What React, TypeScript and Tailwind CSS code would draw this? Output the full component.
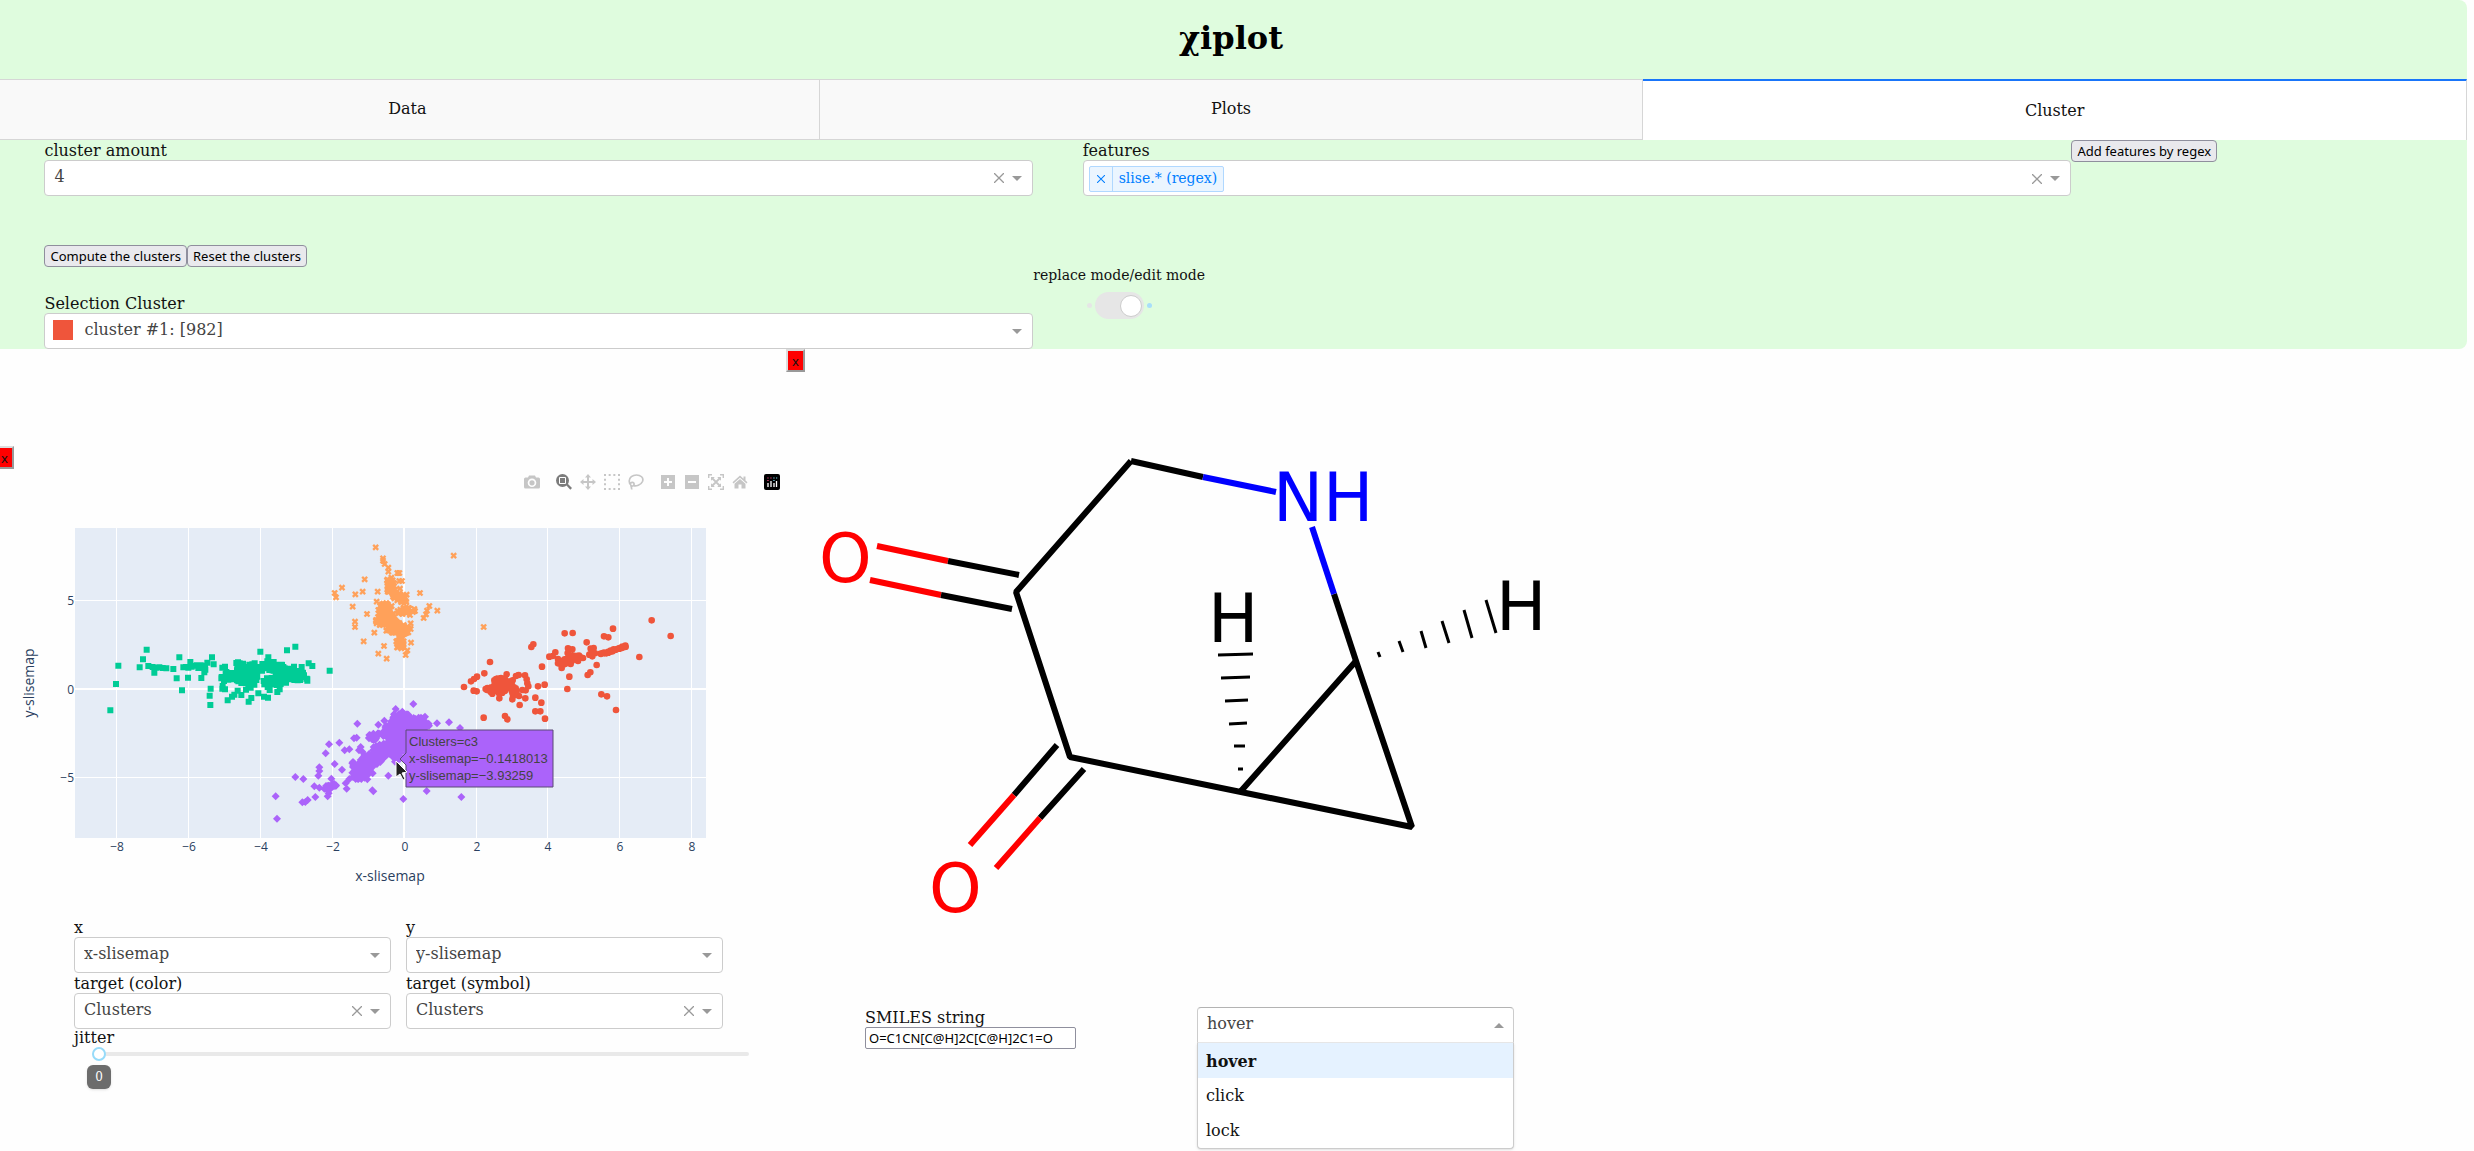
import React, { useId } from "react";

type Band = [x1: number, y1: number, x2: number, y2: number, spread: number, count: number];
type Point = [number, number];

// Marker positions are kept in thirds of a pixel, measured from the top left of the marker layer.
const GREEN: Point[] = [
  [260, 389], [249, 418], [239, 442], [175, 437], [168, 492], [151, 571], [265, 438], [283, 458], [358, 412],
  [350, 475], [340, 447], [384, 473], [366, 511], [449, 527], [451, 555], [452, 506], [456, 412], [461, 433],
  [424, 474], [391, 426], [601, 395], [681, 391], [706, 380], [809, 452], [746, 430], [757, 438], [625, 412],
  [566, 545], [503, 541], [574, 534], [595, 520], [624, 533], [652, 516], [612, 530], [544, 525], [516, 530],
  [725, 441], [702, 440], [487, 443], [495, 440], [484, 475], [488, 498], [495, 508], [278, 441], [288, 443],
  [298, 442], [308, 444], [319, 445], [370, 442], [378, 441], [385, 443], [395, 440], [402, 437], [411, 436],
  [415, 444], [422, 436], [428, 444], [435, 437], [442, 428], [433, 457], [436, 449], [523, 524], [533, 512],
  [558, 509], [629, 510], [659, 508], [572, 503], [487, 506], [740, 476], [742, 482],
];
const GREEN_BANDS: Band[] = [
  [530, 440, 600, 445, 14, 60],
  [495, 470, 590, 470, 20, 60],
  [545, 488, 600, 488, 10, 14],
  [618, 435, 670, 450, 16, 45],
  [618, 490, 665, 480, 16, 28],
  [660, 455, 730, 472, 17, 80],
];

const ORANGE: Point[] = [
  [947, 82], [969, 115], [969, 122], [974, 132], [985, 143], [985, 155], [1012, 159], [1018, 159], [914, 178],
  [846, 203], [824, 219], [828, 232], [886, 223], [908, 215], [953, 215], [878, 260], [921, 282], [885, 305],
  [885, 321], [911, 364], [943, 338], [950, 245], [972, 378], [955, 401], [980, 416], [1037, 405], [1042, 391],
  [1053, 368], [1018, 183], [1026, 183], [1020, 206], [1040, 224], [1080, 219], [1108, 258], [1132, 272],
  [1091, 294], [1098, 283], [1101, 272], [1063, 267], [1065, 273], [1050, 285], [1052, 310], [1181, 107],
  [1271, 321], [960, 258], [950, 310],
];
const ORANGE_BANDS: Band[] = [
  [990, 180, 994, 215, 12, 50],
  [1003, 226, 1032, 240, 12, 36],
  [965, 265, 1000, 260, 14, 22],
  [958, 302, 990, 290, 17, 80],
  [985, 312, 1032, 330, 21, 120],
  [1018, 350, 1022, 378, 12, 44],
  [1015, 275, 1050, 272, 13, 22],
];

const RED: Point[] = [
  [1775, 301], [1832, 348], [1659, 326], [1738, 411], [1668, 570], [1641, 529], [1624, 523], [1610, 435],
  [1583, 465], [1591, 457], [1522, 507], [1528, 470], [1632, 349], [1645, 352], [1580, 367], [1514, 340],
  [1538, 339], [1414, 381], [1420, 373], [1446, 440], [1290, 426], [1273, 460], [1212, 501], [1340, 463],
  [1233, 484], [1242, 477], [1251, 470], [1241, 512], [1250, 514], [1434, 499], [1454, 494], [1444, 548],
  [1426, 533], [1396, 535], [1379, 555], [1426, 574], [1441, 574], [1455, 596], [1335, 588], [1342, 598],
  [1271, 593], [1357, 538], [1318, 535], [1376, 465], [1395, 466], [1400, 478], [1402, 490], [1405, 499],
  [1397, 511], [1387, 510], [1377, 528], [1359, 529], [1468, 410], [1478, 408], [1486, 397], [1524, 385],
  [1537, 388], [1523, 399], [1592, 386], [1601, 384], [1605, 400], [1597, 409], [1588, 404], [1569, 414],
  [1554, 423], [1557, 407], [1532, 432], [1505, 444], [1494, 430], [1494, 417], [1368, 468], [1370, 522],
];
const RED_BANDS: Band[] = [
  [1305, 485, 1345, 490, 14, 46],
  [1285, 512, 1340, 505, 13, 52],
  [1352, 485, 1362, 515, 9, 16],
  [1505, 428, 1535, 418, 9, 30],
  [1535, 413, 1562, 410, 6, 10],
  [1623, 402, 1660, 392, 3, 20],
  [1660, 390, 1696, 379, 2, 20],
];

const PURPLE: Point[] = [
  [1060, 552], [1007, 567], [1027, 575], [892, 611], [955, 614], [973, 602], [994, 604], [838, 668], [807, 673],
  [797, 700], [824, 732], [846, 749], [890, 653], [882, 655], [854, 691], [868, 688], [778, 742], [778, 753],
  [775, 767], [706, 771], [730, 777], [647, 829], [651, 896], [763, 799], [778, 803], [814, 776], [766, 831],
  [727, 847], [736, 846], [743, 840], [803, 829], [806, 820], [857, 790], [860, 806], [902, 681], [907, 695],
  [897, 691], [937, 811], [940, 814], [985, 767], [1030, 837], [1100, 813], [1204, 831], [1200, 624],
  [1167, 607], [1131, 610], [1106, 611], [1107, 617], [1095, 590], [1090, 595], [922, 778], [938, 760],
];
const PURPLE_BANDS: Band[] = [
  [800, 802, 832, 796, 9, 22],
  [880, 768, 915, 755, 18, 46],
  [880, 742, 930, 725, 16, 34],
  [912, 732, 960, 705, 23, 110],
  [950, 705, 1030, 660, 26, 190],
  [926, 660, 950, 640, 12, 20],
  [970, 645, 1010, 610, 16, 44],
  [1003, 588, 1045, 592, 13, 36],
  [1005, 640, 1080, 618, 24, 190],
  [1060, 605, 1086, 603, 12, 34],
  [1010, 705, 1030, 700, 22, 24],
];

function spread(points: Point[], bands: Band[], start: number): Point[] {
  let seed = start;
  const next = () => {
    seed = (seed * 1664525 + 1013904223) % 4294967296;
    return seed / 4294967296;
  };
  const result = [...points];
  for (const [x1, y1, x2, y2, radius, count] of bands) {
    for (let i = 0; i < count; i++) {
      const t = next();
      const r = radius * Math.sqrt(next());
      const a = next() * Math.PI * 2;
      result.push([
        Math.round(x1 + (x2 - x1) * t + r * Math.cos(a)),
        Math.round(y1 + (y2 - y1) * t + r * Math.sin(a)),
      ]);
    }
  }
  return result;
}

const SHAPES = {
  square: "m-9-9h18v18h-18z",
  circle: "m-10 0a10 10 0 1 0 20 0a10 10 0 1 0-20 0z",
  diamond: "m0-12l12 12l-12 12l-12-12z",
  cross: "m-10-5l5-5l5 5l5-5l5 5l-5 5l5 5l-5 5l-5-5l-5 5l-5-5l5-5z",
};

const SERIES = [
  { color: "#EF553B", shape: SHAPES.circle, points: spread(RED, RED_BANDS, 11) },
  { color: "#00CC96", shape: SHAPES.square, points: spread(GREEN, GREEN_BANDS, 5) },
  { color: "#AB63FA", shape: SHAPES.diamond, points: spread(PURPLE, PURPLE_BANDS, 23) },
  { color: "#FFA15A", shape: SHAPES.cross, points: spread(ORANGE, ORANGE_BANDS, 42) },
];

const X_TICKS = [
  { x: 116, label: "−8" }, { x: 188, label: "−6" }, { x: 260, label: "−4" }, { x: 332, label: "−2" },
  { x: 404, label: "0" }, { x: 476, label: "2" }, { x: 547, label: "4" }, { x: 619, label: "6" }, { x: 691, label: "8" },
];
const Y_TICKS = [
  { y: 110, label: "5" }, { y: 199, label: "0" }, { y: 287, label: "−5" },
];

function ScatterPlot() {
  return (
    <svg width="786" height="427" viewBox="0 0 786 427" role="img" aria-label="Scatter plot of x-slisemap against y-slisemap" className="block">
      <rect x="75" y="38" width="631" height="310" fill="#E5ECF6" />
      <g stroke="#fff" shapeRendering="crispEdges">
        {X_TICKS.map((t) => (
          <line key={t.label} x1={t.x} x2={t.x} y1="38" y2="348" strokeWidth={t.label === "0" ? 2 : 1} />
        ))}
        {Y_TICKS.map((t) => (
          <line key={t.label} x1="75" x2="706" y1={t.y} y2={t.y} strokeWidth={t.label === "0" ? 2 : 1} />
        ))}
      </g>
      <svg x="60" y="30" width="720" height="340" viewBox="0 0 2160 1020">
        {SERIES.map((s) => (
          <path key={s.color} fill={s.color} d={s.points.map(([x, y]) => `M${x} ${y}${s.shape}`).join("")} />
        ))}
      </svg>
      <g fill="#2a3f5f" fontFamily="'Open Sans', 'Noto Sans', sans-serif" fontSize="12">
        {X_TICKS.map((t) => (
          <text key={t.label} x={t.x + 1} y="361" textAnchor="middle">{t.label}</text>
        ))}
        {Y_TICKS.map((t) => (
          <text key={t.label} x="74" y={t.y + 5} textAnchor="end">{t.label}</text>
        ))}
        <text x="390" y="391" fontSize="14" textAnchor="middle">x-slisemap</text>
        <text transform="translate(34 193) rotate(-90)" fontSize="14" textAnchor="middle">y-slisemap</text>
      </g>
      <path d="M400 269L406 263V240H553V297H406V275Z" fill="#AB63FA" stroke="#5b4a75" />
      <g fill="#444" fontFamily="'Liberation Sans', Arial, sans-serif" fontSize="13">
        <text x="409" y="256">Clusters=c3</text>
        <text x="409" y="273">x-slisemap=−0.1418013</text>
        <text x="409" y="290">y-slisemap=−3.93259</text>
      </g>
      <path d="M396 271V287L400 284L403 290L405 289L402 283L407 282Z" fill="#222" stroke="#fff" strokeWidth="1" />
    </svg>
  );
}

const BONDS: { color: string; d: string }[] = [
  { color: "#000", d: "M417 105L345 89" },
  { color: "#000", d: "M345 89L230 220L284 385L626 455L570 289L455 419" },
  { color: "#000", d: "M570 289L548 222" },
  { color: "#00f", d: "M548 222L526 155" },
  { color: "#00f", d: "M417 105L490 120" },
  { color: "#f00", d: "M91 174L162 189M84 208L155 223" },
  { color: "#000", d: "M162 189L233 203M155 223L226 237" },
  { color: "#000", d: "M271 373L228 423M298 397L254 446" },
  { color: "#f00", d: "M228 423L184 473M254 446L210 496" },
];

function Molecule() {
  return (
    <svg width="786" height="635" viewBox="0 0 786 635" role="img" aria-label="Molecule O=C1CN[C@H]2C[C@H]2C1=O" className="block">
      <g fill="none" strokeWidth="6">
        {BONDS.map((b) => (
          <path key={b.d} d={b.d} stroke={b.color} strokeLinejoin="bevel" />
        ))}
      </g>
      <path
        d="M432 283L467 282M435 306L464 305M439 329L462 328M443 352L461 351M448 374L459 374M452 397L457 397M592 280L594 285M613 269L617 280M635 259L640 276M656 249L663 271M678 238L686 266M700 228L710 261"
        stroke="#000"
        strokeWidth="3"
      />
      <g fontFamily="'DejaVu Sans', sans-serif" fontSize="67">
        <text x="487" y="149" fill="#00f">NH</text>
        <text x="422" y="270">H</text>
        <text x="710" y="258">H</text>
        <text x="33" y="210" fill="#f00">O</text>
        <text x="143" y="540" fill="#f00">O</text>
      </g>
    </svg>
  );
}

function Cross({ className }: { className: string }) {
  return (
    <svg viewBox="0 0 10 10" className={className} fill="none" stroke="currentColor" aria-hidden="true">
      <path d="M0 0L10 10M10 0L0 10" strokeWidth="1.3" />
    </svg>
  );
}

function Arrow({ up = false }: { up?: boolean }) {
  return (
    <svg width="10" height="5" viewBox="0 0 10 5" fill="#999" aria-hidden="true">
      <path d={up ? "M0 5L5 0L10 5Z" : "M0 0H10L5 5Z"} />
    </svg>
  );
}

function Dropdown(props: { label: string; value: string; clearable?: boolean; swatch?: boolean }) {
  const id = useId();
  return (
    <div>
      <label htmlFor={id} className="block h-5 leading-[22px]">{props.label}</label>
      <div className="relative">
        <select
          id={id}
          className={`block h-9 w-full appearance-none rounded border border-[#ccc] bg-white pb-[3px] text-[#444] outline-none ${props.swatch ? "pl-[39px]" : "pl-[9px]"}`}
        >
          <option>{props.value}</option>
        </select>
        {props.swatch && <span className="absolute left-[9px] top-[7px] size-5 bg-[#EF553B]" />}
        <div className="pointer-events-none absolute inset-y-0 right-[11px] flex items-center gap-2">
          {props.clearable && (
            <button type="button" aria-label={`Clear ${props.label}`} className="pointer-events-auto text-[#999]">
              <Cross className="size-[10px]" />
            </button>
          )}
          <Arrow />
        </div>
      </div>
    </div>
  );
}

function SmallButton({ children }: { children: string }) {
  return (
    <button type="button" className="h-[22px] rounded border border-[#8f8f9d] bg-[#e9e9ed] px-[5px] font-['Noto_Sans',sans-serif] text-[13px] leading-5 whitespace-nowrap text-black">
      {children}
    </button>
  );
}

function CloseButton({ className }: { className: string }) {
  return (
    <button
      type="button"
      className={`h-[23px] w-[19px] border-2 border-t-[#ddd] border-r-[#999] border-b-[#999] border-l-[#ddd] bg-[red] font-['Noto_Sans',sans-serif] text-[13px] leading-[18px] ${className}`}
    >
      x
    </button>
  );
}

function MultiDropdown() {
  return (
    <div>
      <div className="h-5 leading-[22px]" id="features-label">features</div>
      <div role="group" aria-labelledby="features-label" className="flex h-9 items-center justify-between rounded border border-[#ccc] bg-white pt-px pr-[10px] pl-[5px]">
        <div className="flex h-[26px] items-center rounded-xs border border-[#b0d8ff] bg-[#ebf5ff] text-[14px] text-[#007eff]">
          <button type="button" aria-label="Remove slise.* (regex)" className="flex h-full w-[23px] items-center justify-center border-r border-[#b0d8ff]">
            <Cross className="size-2" />
          </button>
          <span className="px-[6px]">slise.* (regex)</span>
        </div>
        <div className="flex items-center gap-2">
          <button type="button" aria-label="Clear features" className="text-[#999]">
            <Cross className="size-[10px]" />
          </button>
          <Arrow />
        </div>
      </div>
    </div>
  );
}

function Tool({ name, dark, children }: { name: string; dark?: boolean; children: React.ReactNode }) {
  return (
    <button type="button" aria-label={name} className={dark ? "text-[#7c7c7c]" : "text-[#c6c6c6]"}>
      <svg width="16" height="16" viewBox="0 0 16 16" fill="currentColor" className="block">{children}</svg>
    </button>
  );
}

function Modebar() {
  return (
    <div className="flex justify-end gap-4 pr-[6px]">
      <Tool name="Download plot as a png">
        <path fillRule="evenodd" d="M1.500 3.500H4L5 1.500H11L12 3.500H14.500Q16 3.500 16 5V13Q16 14.500 14.500 14.500H1.500Q0 14.500 0 13V5Q0 3.500 1.500 3.500ZM8 4.500A4.300 4.300 0 1 0 8 13.100A4.300 4.300 0 1 0 8 4.500ZM8 6.200A2.600 2.600 0 1 1 8 11.400A2.600 2.600 0 1 1 8 6.200Z" />
      </Tool>
      <div className="flex gap-2">
        <Tool name="Zoom" dark>
          <circle cx="6.500" cy="6.500" r="6.500" />
          <path d="M10 11L11.500 9.500L16 14L14.300 15.700Z" />
          <path d="M3.500 3.500H9.500V9.500H3.500Z" fill="none" stroke="#fff" />
        </Tool>
        <Tool name="Pan">
          <path d="M8 0L11 3.500H9V7H12.500V5L16 8L12.500 11V9H9V12.500H11L8 16L5 12.500H7V9H3.500V11L0 8L3.500 5V7H7V3.500H5Z" />
        </Tool>
        <Tool name="Box select">
          <path d="M0 1H16M0 15H16" stroke="currentColor" strokeWidth="2" strokeDasharray="2 2.670" />
          <path d="M1 4.700V12M15 4.700V12" stroke="currentColor" strokeWidth="2" strokeDasharray="2 2.500" />
        </Tool>
        <Tool name="Lasso select">
          <path fill="none" stroke="currentColor" strokeWidth="1.700" d="M5 11.500C8 12.800 13 11 14.500 7.500C16 3.500 12.500 1 8.500 1C4.500 1 1.200 3.500 1.200 7C1.200 9 2 10.500 3 11M2.500 10A1.800 1.800 0 1 1 5.500 11.500C4.500 12.500 3 12 2.800 11C3 13 4 14 3.500 15.500" />
        </Tool>
      </div>
      <div className="flex gap-2">
        <Tool name="Zoom in">
          <path fillRule="evenodd" d="M1 1H15V15H1ZM7 4V7H4V9H7V12H9V9H12V7H9V4Z" />
        </Tool>
        <Tool name="Zoom out">
          <path fillRule="evenodd" d="M1 1H15V15H1ZM4 7V9H12V7Z" />
        </Tool>
        <Tool name="Autoscale">
          <path fill="none" stroke="currentColor" strokeWidth="1.400" d="M.7 4V.7H4M12 .7H15.300V4M15.300 12V15.300H12M4 15.300H.7V12" />
          <path fill="none" stroke="currentColor" strokeWidth="1.800" d="M4 4L12 12M12 4L4 12" />
          <path d="M3 3H6.800L3 6.800ZM13 3V6.800L9.200 3ZM3 13V9.200L6.800 13ZM13 13H9.200L13 9.200Z" />
        </Tool>
        <Tool name="Reset axes">
          <path d="M8 1.500L11.500 4.700V2.500H13.500V6.500L15.500 8.300L14.500 9.500L8 3.700L1.500 9.500L.5 8.300Z" />
          <path d="M8 5L13.500 9.800V14.500H9.500V10.500H6.500V14.500H2.500V9.800Z" />
        </Tool>
      </div>
      <a href="#plotly" aria-label="Produced with Plotly">
        <svg width="16" height="16" viewBox="0 0 16 16" className="block">
          <rect width="16" height="16" rx="2" fill="#000" />
          <path d="M4 9V13M7 7V13M10 9V13M12.500 7V13" stroke="#fff" strokeWidth="1.300" />
          <path d="M3.300 4H4.600M3.300 6.500H4.600M6.300 4H7.600" stroke="#e8457c" strokeWidth="1.200" />
          <path d="M9.300 4H10.600M9.300 6.500H10.600M12 4H13.200" stroke="#7fd6e8" strokeWidth="1.200" />
        </svg>
      </a>
    </div>
  );
}

function PlotControls() {
  return (
    <div className="pl-[74px]">
      <div className="grid w-[649px] grid-cols-2 gap-x-[15px]">
        <Dropdown label="x" value="x-slisemap" />
        <Dropdown label="y" value="y-slisemap" />
        <Dropdown label="target (color)" value="Clusters" clearable />
        <Dropdown label="target (symbol)" value="Clusters" clearable />
      </div>
      <label htmlFor="jitter" className="block h-[18px] leading-[18px]">jitter</label>
      <div className="ml-[18px] w-[657px]">
        <input
          id="jitter"
          type="range"
          min="0"
          max="1"
          step="0.01"
          defaultValue="0"
          className="block h-[14px] w-full appearance-none bg-transparent [&::-webkit-slider-runnable-track]:h-1 [&::-webkit-slider-runnable-track]:rounded-full [&::-webkit-slider-runnable-track]:bg-[#e9e9e9] [&::-webkit-slider-thumb]:-mt-[5px] [&::-webkit-slider-thumb]:size-[14px] [&::-webkit-slider-thumb]:appearance-none [&::-webkit-slider-thumb]:rounded-full [&::-webkit-slider-thumb]:border-2 [&::-webkit-slider-thumb]:border-[#96dbfa] [&::-webkit-slider-thumb]:bg-white"
        />
      </div>
      <output htmlFor="jitter" className="mt-1 ml-[13px] flex h-6 w-6 items-center justify-center rounded-md bg-[#6c6c6c] text-xs text-white shadow-sm">
        0
      </output>
    </div>
  );
}

function TriggerDropdown() {
  return (
    <div className="w-[317px]">
      <div className="relative">
        <select aria-label="Mode" className="block h-9 w-full appearance-none rounded-t border border-[#ccc] border-t-[#b3b3b3] border-b-[#e6e6e6] bg-white pb-[3px] pl-[9px] text-[#444] outline-none">
          <option>hover</option>
          <option>click</option>
          <option>lock</option>
        </select>
        <div className="pointer-events-none absolute inset-y-0 right-[10px] flex items-center">
          <Arrow up />
        </div>
      </div>
      <ul role="listbox" aria-label="Mode options" className="rounded-b border border-t-0 border-[#ccc] bg-white shadow-sm">
        <li role="option" aria-selected="true" className="h-[35px] bg-[#e5f2ff] px-2 leading-[38px] font-bold">hover</li>
        <li role="option" aria-selected="false" className="h-[35px] px-2 leading-[36px]">click</li>
        <li role="option" aria-selected="false" className="h-[35px] px-2 leading-[36px]">lock</li>
      </ul>
    </div>
  );
}

function Tabs() {
  const idle = "h-[61px] border-y border-r border-[#d6d6d6] bg-[#f9f9f9] pb-px";
  return (
    <nav role="tablist" className="-ml-1 grid grid-cols-3">
      <button type="button" role="tab" aria-selected="false" className={idle}>Data</button>
      <button type="button" role="tab" aria-selected="false" className={idle}>Plots</button>
      <button type="button" role="tab" aria-selected="true" className="h-[61px] border-t-2 border-r border-t-[#1975fa] border-r-[#d6d6d6] bg-white">
        Cluster
      </button>
    </nav>
  );
}

function ClusterPanel() {
  return (
    <section className="-ml-[5px]">
      <div className="flex items-start">
        <div className="w-[42%] pl-[2%]">
          <Dropdown label="cluster amount" value="4" clearable />
        </div>
        <div className="w-[42%] pl-[2%]">
          <MultiDropdown />
        </div>
        <SmallButton>Add features by regex</SmallButton>
      </div>
      <div className="mt-[49px] flex items-start">
        <div className="w-[42%] pl-[2%]">
          <div className="mb-[26px] flex">
            <SmallButton>Compute the clusters</SmallButton>
            <SmallButton>Reset the clusters</SmallButton>
          </div>
          <Dropdown label="Selection Cluster" value="cluster #1: [982]" swatch />
        </div>
        <div className="pt-5">
          <label htmlFor="mode" className="block h-5 text-[14px] leading-5">replace mode/edit mode</label>
          <div className="mt-[7px] ml-[54px] flex items-center gap-[3px]">
            <span className="size-[5px] rounded-full bg-[#e6e6e6]" />
            <input
              id="mode"
              type="checkbox"
              role="switch"
              defaultChecked
              className="flex h-[27px] w-[49px] appearance-none items-center justify-end rounded-full bg-[#e6e6e6] pr-[2px] before:size-[22px] before:rounded-full before:border before:border-[#ccc] before:bg-white"
            />
            <span className="size-[5px] rounded-full bg-[#a8defa]" />
          </div>
        </div>
      </div>
    </section>
  );
}

export default function App() {
  return (
    <div className="min-h-screen overflow-hidden bg-[#fefefe] font-['DejaVu_Serif',serif] text-base text-[#111]">
      <header className="mr-[7px] overflow-hidden rounded-r-lg bg-[#dffcde]">
        <h1 className="flex h-[79px] items-center justify-center pr-[5px] pb-[3px] text-[32px] font-bold text-black">χiplot</h1>
        <Tabs />
        <ClusterPanel />
      </header>
      <main className="flex items-start">
        <section className="w-[786px] shrink-0 pt-[97px]">
          <CloseButton className="-ml-[5px] block" />
          <div className="pt-[5px]">
            <Modebar />
          </div>
          <ScatterPlot />
          <PlotControls />
        </section>
        <section className="grow">
          <CloseButton className="block" />
          <Molecule />
          <div className="flex items-start pl-[79px]">
            <div className="w-[332px]">
              <label htmlFor="smiles" className="block h-5 leading-[22px]">SMILES string</label>
              <input
                id="smiles"
                type="text"
                defaultValue="O=C1CN[C@H]2C[C@H]2C1=O"
                className="block h-[22px] w-[211px] rounded-xs border border-[#8f8f9d] bg-white px-[3px] font-['Noto_Sans',sans-serif] text-[13px] text-black"
              />
            </div>
            <TriggerDropdown />
          </div>
        </section>
      </main>
    </div>
  );
}
